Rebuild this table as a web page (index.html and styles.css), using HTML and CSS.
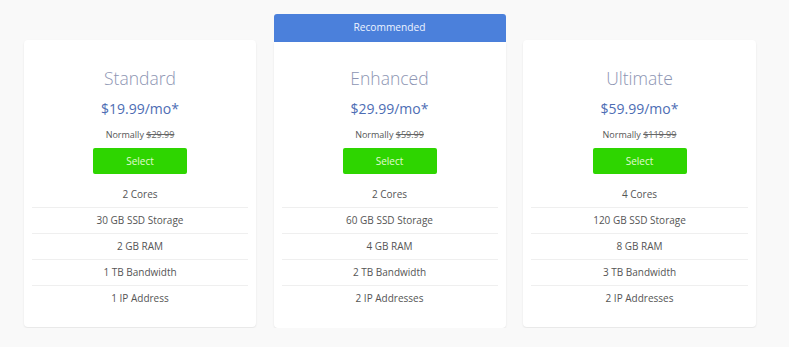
FILE: index.html
```
<!DOCTYPE html>
<html>
<head>
<meta charset="utf-8">
<link rel="stylesheet" href="styles.css">
</head>
<body>
<div class="plans">
  <div class="plan">
    <div class="card">
      <h2 class="name">Standard</h2>
      <div class="price">$19.99/mo*</div>
      <div class="normally">Normally <s>$29.99</s></div>
      <div class="btn">Select</div>
      <ul class="features">
        <li>2 Cores</li>
        <li>30 GB SSD Storage</li>
        <li>2 GB RAM</li>
        <li>1 TB Bandwidth</li>
        <li>1 IP Address</li>
      </ul>
    </div>
  </div>
  <div class="plan plan-rec">
    <div class="rec">Recommended</div>
    <div class="card card-rec">
      <h2 class="name">Enhanced</h2>
      <div class="price">$29.99/mo*</div>
      <div class="normally">Normally <s>$59.99</s></div>
      <div class="btn">Select</div>
      <ul class="features">
        <li>2 Cores</li>
        <li>60 GB SSD Storage</li>
        <li>4 GB RAM</li>
        <li>2 TB Bandwidth</li>
        <li>2 IP Addresses</li>
      </ul>
    </div>
  </div>
  <div class="plan">
    <div class="card">
      <h2 class="name">Ultimate</h2>
      <div class="price">$59.99/mo*</div>
      <div class="normally">Normally <s>$119.99</s></div>
      <div class="btn">Select</div>
      <ul class="features">
        <li>4 Cores</li>
        <li>120 GB SSD Storage</li>
        <li>8 GB RAM</li>
        <li>3 TB Bandwidth</li>
        <li>2 IP Addresses</li>
      </ul>
    </div>
  </div>
</div>
</body>
</html>
```
FILE: styles.css
```
html, body {
  margin: 0;
  padding: 0;
  background: #f9f9f9;
  font-family: "Open Sans", "Noto Sans", sans-serif;
}
.plans {
  display: grid;
  grid-template-columns: 232px 232px 233px;
  column-gap: 17.5px;
  align-items: start;
  padding: 14px 0 0 24px;
}
.plan {
  margin-top: 26px;
}
.plan-rec {
  margin-top: 0;
}
.rec {
  height: 28px;
  line-height: 27px;
  background: #4b80db;
  color: #eef4ff;
  font-size: 10.2px;
  text-align: center;
  border-radius: 3px 3px 0 0;
}
.card {
  background: #fff;
  border-radius: 4px;
  box-shadow: 0 1px 2px rgba(0,0,0,0.09);
  padding: 26px 8px 15px;
  text-align: center;
}
.card-rec {
  border-radius: 0 0 4px 4px;
  padding-top: 24px;
  padding-bottom: 16px;
}
.name {
  margin: 0;
  font-weight: 300;
  font-size: 17.5px;
  line-height: 24px;
  color: #8d95b3;
}
.price {
  margin-top: 9px;
  font-size: 14px;
  line-height: 20px;
  color: #4d6db4;
}
.normally {
  margin-top: 10px;
  font-size: 9px;
  line-height: 12px;
  color: #555;
}
.normally s {
  color: #666;
}
.btn {
  margin: 7px auto 0;
  width: 94px;
  height: 26px;
  line-height: 26px;
  background: #2ed500;
  color: #e2fbd4;
  font-size: 10px;
  border-radius: 2px;
}
.features {
  list-style: none;
  margin: 8px 0 0;
  padding: 0;
}
.features li {
  height: 25px;
  line-height: 25px;
  border-bottom: 1px solid #efefef;
  font-size: 10px;
  color: #555;
}
.features li:last-child {
  border-bottom: 0;
  height: 26px;
}
```
